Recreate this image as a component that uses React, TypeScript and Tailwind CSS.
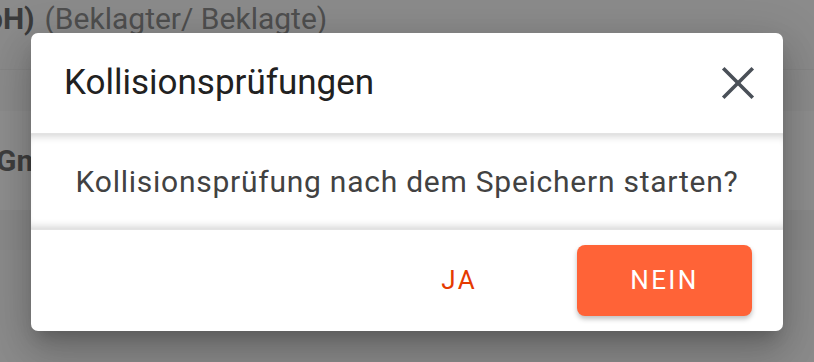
import { X } from 'lucide-react'

export default function App() {
  return (
    <div className="relative w-[814px] h-[362px] overflow-hidden bg-[#8c8c8c] font-['Roboto',sans-serif]">
      {/* page behind the overlay */}
      <div className="flex flex-col">
        <div className="h-[70px] flex items-start border-b border-[#868686] bg-[#8b8b8b]">
          <span className="-ml-[14px] text-[30px] leading-[38px] font-bold text-[#3b3b3b]">bH)</span>
          <span className="ml-[10px] text-[30px] leading-[38px] text-[#4f4f4f]">(Beklagter/ Beklagte)</span>
        </div>
        <div className="h-[41px] bg-[#8c8c8c]" />
        <div className="h-[99px] flex items-center bg-[#8f8f8f]">
          <span className="-ml-[4px] text-[30px] font-bold text-[#3f3f3f]">Gmbh</span>
        </div>
        <div className="h-[40px] bg-[#8a8a8a]" />
        <div className="flex-1 bg-[#8c8c8c]" />
      </div>

      {/* dialog */}
      <div className="absolute left-[31px] top-[33px] w-[752px] h-[298px] bg-white rounded-[7px] flex flex-col shadow-[0_11px_15px_-7px_rgba(0,0,0,0.2),0_24px_38px_3px_rgba(0,0,0,0.14),0_9px_46px_8px_rgba(0,0,0,0.12)]">
        <div className="h-[100px] flex items-center justify-between pl-[33px] pr-[18px]">
          <h2 className="text-[35px] text-[#212121] font-normal">Kollisionsprüfungen</h2>
          <X size={54} strokeWidth={1.6} strokeLinecap="square" className="text-[#4a5058]" />
        </div>
        <div className="h-[97px] flex items-center justify-center border-y border-[#e3e3e3] shadow-[inset_0_8px_8px_-6px_rgba(0,0,0,0.18),inset_0_-8px_8px_-6px_rgba(0,0,0,0.18)]">
          <p className="text-[30px] tracking-[0.75px] text-[#424242]">Kollisionsprüfung nach dem Speichern starten?</p>
        </div>
        <div className="flex-1 flex items-center justify-end gap-[76px] pr-[31px]">
          <button className="px-[24px] h-[71px] text-[26px] tracking-[0.09em] uppercase text-[#e53a00]">Ja</button>
          <button className="w-[175px] h-[71px] rounded-[8px] bg-[#ff6337] text-white text-[26px] tracking-[0.09em] uppercase shadow-[0_3px_5px_rgba(0,0,0,0.25)]">Nein</button>
        </div>
      </div>
    </div>
  )
}
